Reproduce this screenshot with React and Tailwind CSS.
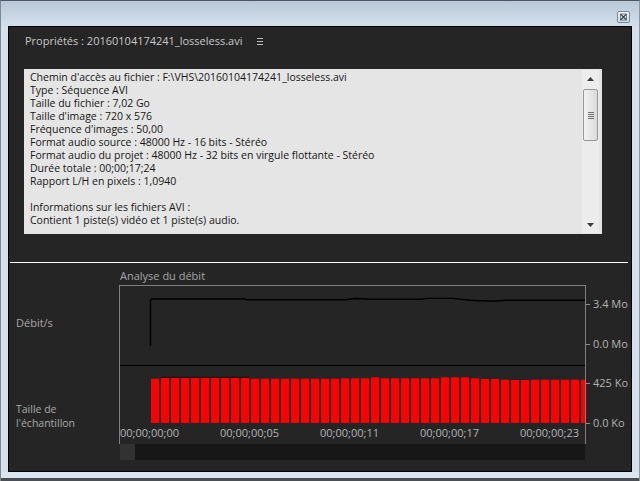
import React from "react";

const infoLines = [
  "Chemin d'accès au fichier : F:\\VHS\\20160104174241_losseless.avi",
  "Type : Séquence AVI",
  "Taille du fichier : 7,02 Go",
  "Taille d'image : 720 x 576",
  "Fréquence d'images : 50,00",
  "Format audio source : 48000 Hz - 16 bits - Stéréo",
  "Format audio du projet : 48000 Hz - 32 bits en virgule flottante - Stéréo",
  "Durée totale : 00;00;17;24",
  "Rapport L/H en pixels : 1,0940",
  "",
  "Informations sur les fichiers AVI :",
  "Contient 1 piste(s) vidéo et 1 piste(s) audio.",
];

const barTops = [
  12.7, 11.3, 11.3, 11.3, 11.3, 11.3, 11.3, 11.3, 11.3, 11.3,
  12.7, 12.7, 12.7, 12.7, 12.7, 12.7, 12.7, 12.7, 12.7, 12.3,
  12.3, 12.3, 11.3, 12.3, 12.3, 12.3, 12.3, 12.3, 12.3, 11.3,
  11.3, 11.3, 12.3, 13, 13, 13.7, 14, 14, 13.7, 13.7,
  13.7, 13.7, 13.7, 13.7,
];

function CloseButton() {
  return (
    <svg width="13" height="12" viewBox="0 0 13 12">
      <defs>
        <linearGradient id="cb" x1="0" y1="0" x2="0" y2="1">
          <stop offset="0" stopColor="#f6f8fb" />
          <stop offset="1" stopColor="#ccd6e2" />
        </linearGradient>
      </defs>
      <rect x="0.5" y="0.5" width="12" height="11" rx="1.5" fill="url(#cb)" stroke="#76879a" />
      <rect x="3.5" y="3" width="6" height="6" fill="none" stroke="#55616e" strokeWidth="0.8" />
      <path d="M3.8 3.3 L9.2 8.7 M9.2 3.3 L3.8 8.7" stroke="#2d3742" strokeWidth="1.2" />
    </svg>
  );
}

function Hamburger() {
  return (
    <svg width="6" height="7" viewBox="0 0 6 7">
      <path d="M0 0.5 H6 M0 3.5 H6 M0 6.5 H6" stroke="#bdbdbd" strokeWidth="1" />
    </svg>
  );
}

function ArrowUp() {
  return (
    <svg width="7" height="4" viewBox="0 0 7 4">
      <path d="M3.5 0 L7 4 L0 4 Z" fill="#3c3c3c" />
    </svg>
  );
}

function ArrowDown() {
  return (
    <svg width="7" height="4" viewBox="0 0 7 4">
      <path d="M0 0 L7 0 L3.5 4 Z" fill="#3c3c3c" />
    </svg>
  );
}

function RateChart() {
  return (
    <svg width="465" height="79" viewBox="0 0 465 79" className="block">
      <path
        d="M30.5 60 L30.5 14 Q30.8 13 33 13 L125 13 L127 13.7 L225 13.7 L236 12.5 L250 13.3 L300 13.3 L307 12.4 L333 12.4 L350 14.2 L372 15.3 L386 14.3 L465 14.3"
        fill="none"
        stroke="#000"
        strokeWidth="1.4"
      />
    </svg>
  );
}

function SizeChart() {
  return (
    <svg width="465" height="58" viewBox="0 0 465 58" className="block">
      {barTops.map((t, i) => (
        <rect key={i} x={31 + i * 10} y={t} width="8" height={57 - t} fill="#ff0000" />
      ))}
      <path d="M41 11.3 H129" stroke="#000" strokeWidth="0.8" />
    </svg>
  );
}

function AxisLabel({ children, className }) {
  return (
    <div className={"flex items-center h-[14px] " + className}>
      <div className="w-[4px] h-[1px] bg-[#8a8a8a]" />
      <span className="ml-[3px] text-[11px] leading-[14px] text-[#b3b3b3]">{children}</span>
    </div>
  );
}

export default function App() {
  return (
    <div className="w-[640px] h-[481px] flex flex-col bg-[#d5e0ec] border-t border-l border-r border-t-[#4d5660] border-l-[#7d8894] border-r-[#8b96a2] font-['Open_Sans',sans-serif] overflow-hidden">
      {/* title bar */}
      <div className="h-[25px] flex justify-end pt-[10px] pr-[9px] bg-linear-to-b from-[#b9c8d8] to-[#d4dfeb]">
        <CloseButton />
      </div>

      {/* panel */}
      <div className="mx-[7px] h-[446px] border border-black bg-[#252525] flex flex-col">
        {/* header */}
        <div className="flex items-center pl-[16px] pt-[6px] h-[22px]">
          <span className="text-[11px] leading-[16px] text-[#c8c8c8]">
            Propriétés : 20160104174241_losseless.avi
          </span>
          <span className="ml-[14px] mt-[1px]">
            <Hamburger />
          </span>
        </div>

        {/* info box */}
        <div className="ml-[15px] mt-[20px] w-[578px] h-[165px] bg-[#e5e5e5] flex">
          <div className="flex-1 pl-[6px] pt-[2px] text-[10.5px] leading-[13px] text-[#161616] whitespace-pre">
            {infoLines.map((l, i) => (
              <div key={i} className="h-[13px]">{l}</div>
            ))}
          </div>
          <div className="w-[17px] mr-[3px] my-[1px] bg-[#ececec] flex flex-col items-center">
            <div className="h-[17px] flex items-center justify-center">
              <ArrowUp />
            </div>
            <div className="mt-[2px] w-[15px] h-[52px] rounded-[2px] border border-[#979797] bg-linear-to-r from-[#f3f3f3] to-[#d9d9d9] flex flex-col items-center justify-center gap-[1px]">
              <div className="w-[6px] h-[1px] bg-[#6f6f6f]" />
              <div className="w-[6px] h-[1px] bg-[#6f6f6f]" />
              <div className="w-[6px] h-[1px] bg-[#6f6f6f]" />
              <div className="w-[6px] h-[1px] bg-[#6f6f6f]" />
            </div>
            <div className="flex-1" />
            <div className="h-[17px] flex items-center justify-center">
              <ArrowDown />
            </div>
          </div>
        </div>

        {/* separator */}
        <div className="ml-[1px] mt-[28px] w-[618px] h-[1px] bg-white" />

        {/* chart section */}
        <div className="flex">
          {/* left labels */}
          <div className="w-[110px] pl-[7px] text-[11px] text-[#a9a9a9]">
            <div className="mt-[52px] leading-[16px]">Débit/s</div>
            <div className="mt-[71px] text-[10.5px] leading-[14px]">
              Taille de
              <br />
              l'échantillon
            </div>
          </div>

          {/* chart */}
          <div className="w-[467px] flex flex-col">
            <div className="pl-[1px] pt-[5px] h-[22px] text-[11px] leading-[16px] text-[#a6a6a6]">
              Analyse du débit
            </div>
            <div className="border-l border-r border-t border-[#808080] flex flex-col">
              <RateChart />
              <div className="h-[1px] bg-black" />
              <div className="h-[78px] flex flex-col">
                <SizeChart />
                <div className="flex pt-[2px] text-[11px] leading-[14px] text-[#b4b4b4]">
                  <span className="w-[100px]">00;00;00;00</span>
                  <span className="w-[100px]">00;00;00;05</span>
                  <span className="w-[100px]">00;00;00;11</span>
                  <span className="w-[100px]">00;00;00;17</span>
                  <span>00;00;00;23</span>
                </div>
              </div>
            </div>
            <div className="ml-[1px] w-[465px] h-[16px] bg-[#171717] flex">
              <div className="w-[15px] h-full bg-[#323232]" />
            </div>
          </div>

          {/* right labels */}
          <div className="flex flex-col">
            <AxisLabel className="mt-[34px]">3.4 Mo</AxisLabel>
            <AxisLabel className="mt-[26px]">0.0 Mo</AxisLabel>
            <AxisLabel className="mt-[25px]">425 Ko</AxisLabel>
            <AxisLabel className="mt-[26px]">0.0 Ko</AxisLabel>
          </div>
        </div>
      </div>

      {/* bottom frame */}
      <div className="h-[6px] bg-[#dbe5ef]" />
      <div className="h-[3px] bg-[#4a4f55]" />
    </div>
  );
}
